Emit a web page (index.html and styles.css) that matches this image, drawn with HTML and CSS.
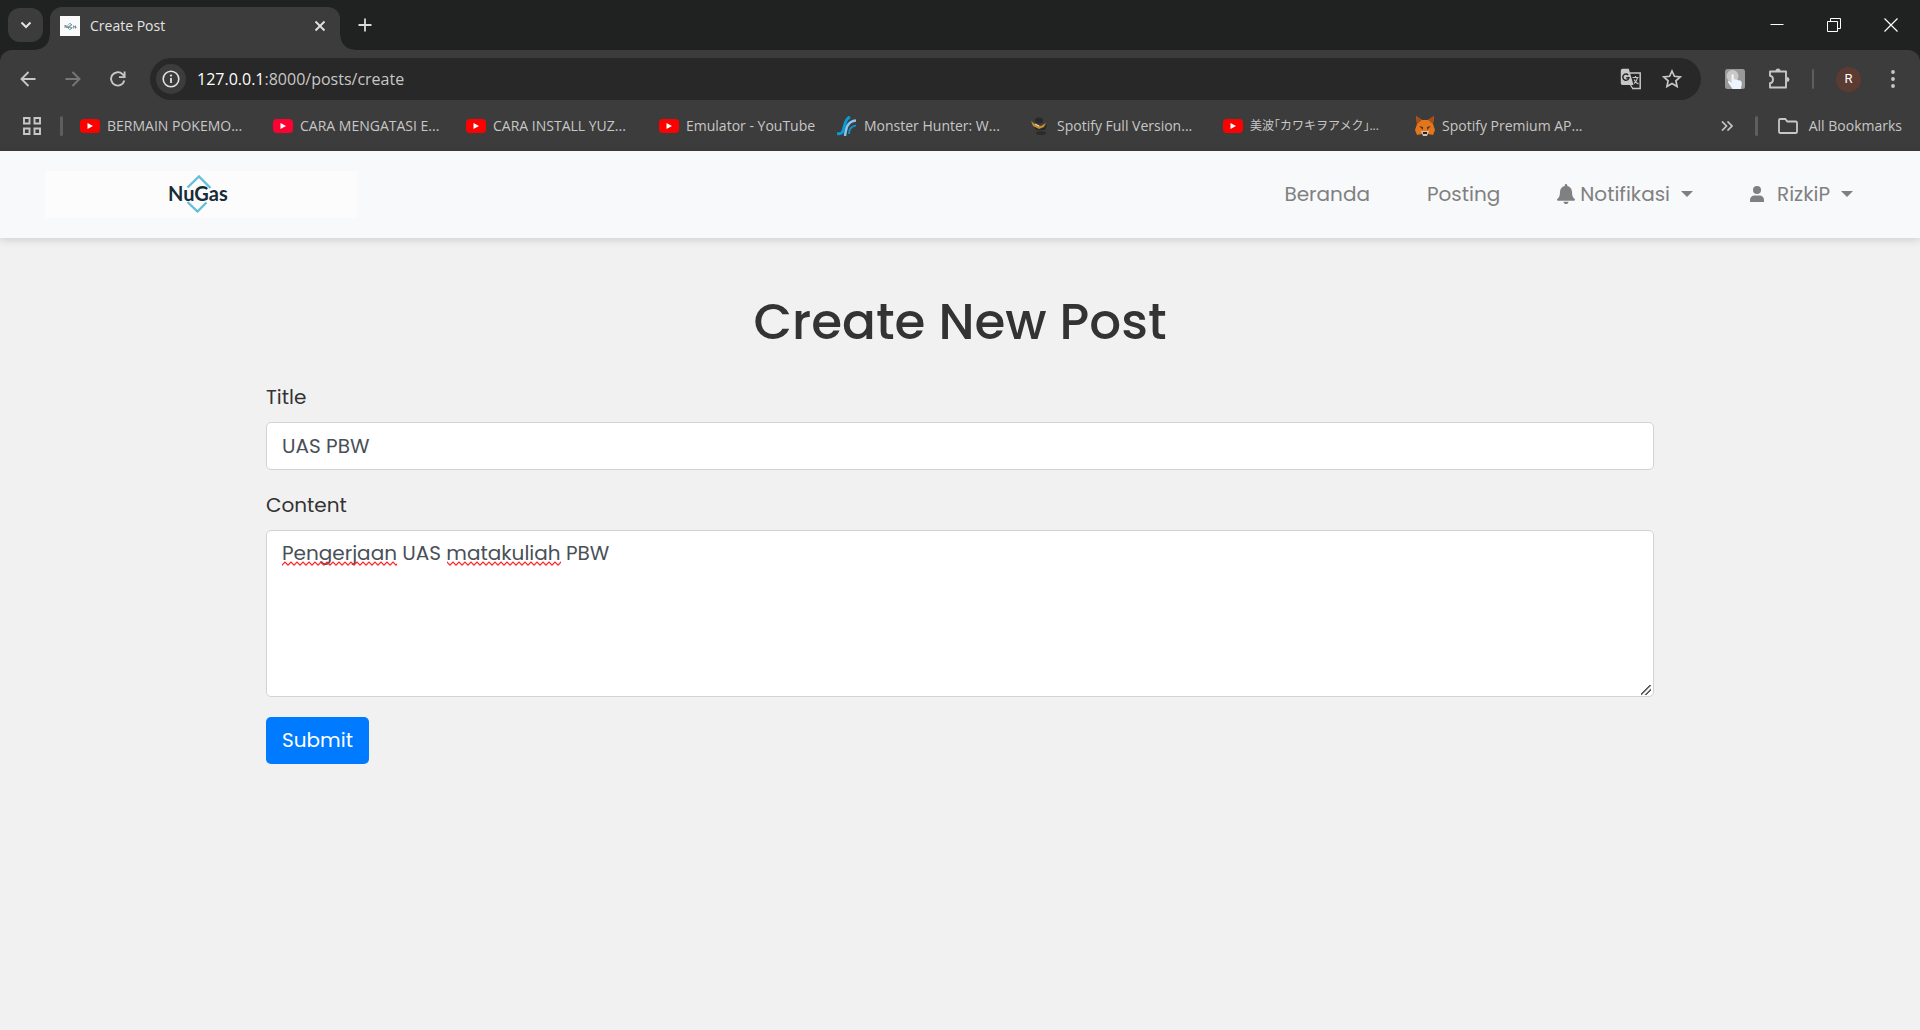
FILE: index.html
```html
<!DOCTYPE html>
<html lang="id">
<head>
<meta charset="utf-8">
<meta name="viewport" content="width=device-width, initial-scale=1">
<title>Create Post</title>
<link rel="stylesheet" href="styles.css">
</head>
<body>
<svg class="symbols" aria-hidden="true">
  <symbol id="youtube" viewBox="0 0 20 20"><rect y="3" width="20" height="14" rx="4" fill="currentColor"/><path d="M7.500 7v6l5.500-3z" fill="#fff"/></symbol>
</svg>
<div class="browser">
  <div class="tab-strip">
    <button class="tab-search" aria-label="Search tabs"><svg width="12" height="12" viewBox="0 0 12 12"><path d="M1.500 3.500 6 8l4.500-4.500" fill="none" stroke="#e3e3e3" stroke-width="2"/></svg></button>
    <div class="tab">
      <svg width="20" height="20" viewBox="0 0 20 20"><rect width="20" height="20" fill="#fafafa"/><path d="M8 9l2-2 2 2M8 12l2 2 2-2" fill="none" stroke="#6cc3da"/><path d="M5 12V9l2 3V9m1 1v2h1v-2m3-1h-2v3h2v-1m1-1h1v2h-1m3-2h-1v1h1v1h-1" fill="none" stroke="#384a55" stroke-width=".6"/></svg>
      <span class="tab-title">Create Post</span>
      <button class="icon-button tab-close" aria-label="Close tab"><svg width="12" height="12" viewBox="0 0 12 12"><path d="M1.500 1.500l9 9m0-9l-9 9" stroke="#e3e3e3" stroke-width="1.800"/></svg></button>
    </div>
    <button class="icon-button new-tab" aria-label="New tab"><svg width="14" height="14" viewBox="0 0 14 14"><path d="M7 .5v13M.5 7h13" stroke="#dadada" stroke-width="1.800"/></svg></button>
    <div class="window-controls">
      <button class="icon-button" aria-label="Minimize"><svg width="14" height="14" viewBox="0 0 14 14"><path d="M.5 6.500h13" stroke="#fff"/></svg></button>
      <button class="icon-button" aria-label="Restore"><svg width="14" height="14" viewBox="0 0 14 14"><path d="M.5 3.500h10v10H.5zM3.500 3V.5h10v10H11" fill="none" stroke="#fff"/></svg></button>
      <button class="icon-button" aria-label="Close"><svg width="14" height="14" viewBox="0 0 14 14"><path d="M.5.5l13 13m0-13l-13 13" stroke="#fff" stroke-width="1.200"/></svg></button>
    </div>
  </div>
  <div class="toolbar">
    <div class="history">
      <button class="icon-button" aria-label="Back"><svg width="16" height="16" viewBox="0 0 16 16"><path d="M15.500 8H2M8.500 1L1.500 8l7 7" fill="none" stroke="#c7c7c7" stroke-width="1.900"/></svg></button>
      <button class="icon-button" aria-label="Forward"><svg width="16" height="16" viewBox="0 0 16 16"><path d="M.5 8H14M7.500 1l7 7-7 7" fill="none" stroke="#777" stroke-width="1.900"/></svg></button>
      <button class="icon-button" aria-label="Reload"><svg width="16" height="16" viewBox="0 0 16 16"><path d="M14.300 9.500A6.700 6.700 0 1 1 12.700 3.300L14 4.600M14.600.5v5.600H9" fill="none" stroke="#c7c7c7" stroke-width="1.900"/></svg></button>
    </div>
    <div class="address-bar">
      <button class="site-info" aria-label="Site information"><svg width="18" height="18" viewBox="0 0 18 18"><circle cx="9" cy="9" r="7.800" fill="none" stroke="#e3e3e3" stroke-width="1.600"/><path d="M9 8v5" stroke="#e3e3e3" stroke-width="1.800"/><circle cx="9" cy="5.600" r="1.100" fill="#e3e3e3"/></svg></button>
      <a class="url" href="#"><span class="url-host">127.0.0.1</span>:8000/posts/create</a>
      <button class="icon-button" aria-label="Translate"><svg width="22" height="22" viewBox="0 0 22 22"><path d="M10 5h10.200v15.500H12" fill="none" stroke="#c7c7c7" stroke-width="1.500"/><path d="M2.500.8h6.300l4.700 16.200H2.500a1.700 1.700 0 0 1-1.700-1.700V2.500A1.700 1.700 0 0 1 2.500.8z" fill="#c7c7c7"/><path d="M8.200 7a3.100 3.100 0 1 0 .8 2.700H6.200" fill="none" stroke="#282828" stroke-width="1.500"/><path d="M12.500 9.500H18.500M15.500 8v1.500M17.500 9.500c-.5 3-2 5-3.500 6M14 11.500c1 2 2.500 3.500 4.500 4.500M10.500 17l2.500 4" fill="none" stroke="#c7c7c7" stroke-width="1.200"/></svg></button>
      <button class="icon-button" aria-label="Bookmark this page"><svg width="20" height="20" viewBox="0 0 20 20"><path d="M10 2l2.400 5.300 5.800.6-4.300 3.900 1.200 5.700L10 14.600l-5.100 2.900 1.200-5.700L1.800 7.900l5.800-.6z" fill="none" stroke="#c7c7c7" stroke-width="1.700"/></svg></button>
    </div>
    <div class="extensions">
      <button class="icon-button" aria-label="Click helper"><svg width="22" height="22" viewBox="0 0 22 22"><rect x="1" y="1" width="20" height="20" rx="2.500" fill="#999"/><circle cx="8.500" cy="8" r="6" fill="#c8c8c8"/><path d="M7.500 7.500c0-1.600 2.300-1.600 2.300 0v4l1-.5 1.200.8 1.300-.4 1.200 1 1.300-.2c1.500.6 2 2 2 3.800l-1 5H8.500L4 14.300c-.4-1.300 1-1.700 2-.8l1.500 1z" fill="#eef4fb"/></svg></button>
      <button class="icon-button" aria-label="Extensions"><svg width="22" height="22" viewBox="0 0 22 22"><path d="M2 3.500h16v16H2v-4.300c4-.6 4-6.800 0-7.400z" fill="none" stroke="#c7c7c7" stroke-width="1.900" stroke-linejoin="round"/><path d="M7.500 3a2.500 2.500 0 0 1 5 0M19 9a2.500 2.500 0 0 1 0 5" fill="#c7c7c7"/></svg></button>
      <span class="divider thin"></span>
      <button class="profile" aria-label="Profile R">R</button>
      <button class="icon-button more" aria-label="Menu"><svg width="6" height="18" viewBox="0 0 6 18" fill="#c7c7c7"><circle cx="3" cy="2" r="1.900"/><circle cx="3" cy="9" r="1.900"/><circle cx="3" cy="16" r="1.900"/></svg></button>
    </div>
  </div>
  <div class="bookmarks">
    <button class="icon-button" aria-label="Apps"><svg width="18" height="18" viewBox="0 0 18 18"><path d="M1 1h5.500v5.500H1zM11.500 1H17v5.500h-5.500zM1 11.500h5.500V17H1zM11.500 11.500H17V17h-5.500z" fill="none" stroke="#c7c7c7" stroke-width="1.900"/></svg></button>
    <span class="divider"></span>
    <nav class="bookmark-list" aria-label="Bookmarks">
      <a href="#"><svg class="yt"><use href="#youtube"/></svg>BERMAIN POKEMO...</a>
      <a href="#"><svg class="yt pink"><use href="#youtube"/></svg>CARA MENGATASI E...</a>
      <a href="#"><svg class="yt"><use href="#youtube"/></svg>CARA INSTALL YUZ...</a>
      <a class="short" href="#"><svg class="yt"><use href="#youtube"/></svg>Emulator - YouTube</a>
      <a href="#"><svg viewBox="0 0 20 20" fill="none"><path d="M0 17.500C7 19 6 13 8 8c1-4 3-6 5-7" stroke="#0a9bd8" stroke-width="3"/><path d="M8 20C9 13 10 5 19 4.500" stroke="#86c9ee" stroke-width="2.500"/><path d="M12 18c0-5 2-8 7-8.500" stroke="#178ac0" stroke-width="2"/></svg>Monster Hunter: W...</a>
      <a href="#"><svg viewBox="0 0 20 20"><ellipse cx="9" cy="4.500" rx="4" ry="3" fill="#292929"/><path d="M3 9l9 2 5-3-2 6H6z" fill="#282828"/><path d="M1 5l5 4 5 1 5-3-2 4-5 2-6-3z" fill="#c78b31"/><path d="M5 8l4 2" stroke="#eee"/><ellipse cx="11" cy="17" rx="5" ry="2" fill="#2b2b2b"/></svg>Spotify Full Version...</a>
      <a class="japanese" href="#" lang="ja"><svg class="yt"><use href="#youtube"/></svg>美波｢カワキヲアメク｣...</a>
      <a href="#"><svg viewBox="0 0 20 20"><path d="M1 0l6 4h6l6-4-1 8 2 6-2 5-5-1-3 2-3-2-5 1-2-5 2-6z" fill="#e2761b"/><path d="M1 0l6 4-5 4zM19 0l-6 4 5 4z" fill="#a94c1d"/><path d="M4 10l4 1v3zM16 10l-4 1v3z" fill="#5d321e"/><path d="M6 15h8l-2 5H8z" fill="#d7c1b3"/><path d="M8 16h4v2H8z" fill="#222"/></svg>Spotify Premium AP...</a>
    </nav>
    <div class="bookmark-end">
      <button class="icon-button" aria-label="More bookmarks"><svg width="12" height="10" viewBox="0 0 12 10"><path d="M1 .5L5.500 5 1 9.500M6.500.5L11 5 6.500 9.500" fill="none" stroke="#c7c7c7" stroke-width="1.700"/></svg></button>
      <span class="divider"></span>
      <a href="#"><svg viewBox="0 0 20 16"><path d="M1 2.300Q1 1 2.300 1h5l2 2.500h8.400q1.300 0 1.300 1.300v8.900q0 1.300-1.300 1.300H2.300Q1 15 1 13.700z" fill="none" stroke="#c7c7c7" stroke-width="1.800"/></svg>All Bookmarks</a>
    </div>
  </div>
</div>

<header class="navbar">
  <a class="brand" href="#">
    <svg class="brand-mark" width="26" height="38" viewBox="0 0 26 38"><path d="M1.500 12.500L13 1.500l11.500 11.500M1.500 27l10 9.500L20.500 27.500" fill="none" stroke="#64bfdc" stroke-width="2.400"/></svg>
    <span class="brand-name">NuGas</span>
  </a>
  <nav class="menu">
    <a href="#">Beranda</a>
    <a href="#">Posting</a>
    <button><svg class="bell" width="18" height="20" viewBox="0 0 18 20" fill="currentColor"><path d="M9 0c.8 0 1.300.6 1.300 1.300v.8C13.500 2.800 15 5.200 15 8c0 4 1 5.500 2.600 6.900.9.900.3 1.900-.7 1.900H1.100c-1 0-1.600-1-.7-1.900C2 13.500 3 12 3 8c0-2.800 1.500-5.200 4.700-5.900v-.8C7.700.6 8.200 0 9 0zM6.500 17.700h5C11.300 19.200 10.300 20 9 20s-2.300-.8-2.500-2.300z"/></svg><span>Notifikasi</span><i class="caret"></i></button>
    <button class="user"><svg width="14" height="16" viewBox="0 0 14 16" fill="currentColor"><circle cx="7" cy="4" r="4"/><path d="M0 16v-2c0-3 2-4.500 4.500-4.500h5C12 9.500 14 11 14 14v2z"/></svg><span>RizkiP</span><i class="caret"></i></button>
  </nav>
</header>

<main class="container">
  <h1>Create New Post</h1>
  <form>
    <label for="title">Title</label>
    <input id="title" type="text" value="UAS PBW" spellcheck="false">
    <label for="content">Content</label>
    <div class="content-field">
      <textarea id="content" spellcheck="false">Pengerjaan UAS matakuliah PBW</textarea>
      <svg class="spelling" width="340" height="6" aria-hidden="true">
        <defs><pattern id="wave" width="6" height="6" patternUnits="userSpaceOnUse"><path d="M-1 3L0 4.200 3 1.200l3 3L7 3" fill="none" stroke="#f22" stroke-width="1.200"/></pattern></defs>
        <rect class="first-word" height="6" fill="url(#wave)"/><rect class="second-word" height="6" fill="url(#wave)"/>
      </svg>
    </div>
    <button class="submit" type="submit">Submit</button>
  </form>
</main>
</body>
</html>
```
FILE: styles.css
```css
* { box-sizing: border-box; }

body {
  margin: 0;
  background: #f1f1f1;
  color: #333;
  font-family: "Poppins", "Inter", sans-serif;
  font-size: 20px;
  line-height: 30px;
}

a { color: inherit; text-decoration: none; }
button { padding: 0; border: 0; background: none; color: inherit; font: inherit; cursor: pointer; }
svg { display: block; flex: none; }
.symbols { position: absolute; width: 0; height: 0; }

/* Browser frame */
.browser {
  background: #202221;
  color: #c7c7c7;
  font-family: "Segoe UI", "Open Sans", "Noto Sans CJK JP", sans-serif;
  font-size: 14px;
  line-height: 20px;
}
.icon-button { display: flex; flex: none; align-items: center; justify-content: center; }

.tab-strip { display: flex; align-items: center; height: 50px; padding-left: 8px; }
.tab-search {
  display: flex;
  align-items: center;
  justify-content: center;
  width: 35px;
  height: 34px;
  border-radius: 12px;
  background: #3c3c3c;
}
.tab {
  position: relative;
  display: flex;
  align-items: center;
  align-self: flex-end;
  gap: 10px;
  width: 290px;
  height: 43px;
  margin-left: 7px;
  padding: 0 14px 6px 10px;
  border-radius: 12px 12px 0 0;
  background: #3c3c3c;
  color: #e3e3e3;
}
.tab::before,
.tab::after {
  content: "";
  position: absolute;
  bottom: 0;
  width: 14px;
  height: 14px;
}
.tab::before { right: 100%; background: radial-gradient(circle at 0 0, transparent 13px, #3c3c3c 14px); }
.tab::after { left: 100%; background: radial-gradient(circle at 100% 0, transparent 13px, #3c3c3c 14px); }
.tab-title { flex: 1; }
.new-tab { margin-left: 18px; }
.window-controls { display: flex; gap: 43px; margin-left: auto; padding-right: 22px; }

.toolbar {
  display: flex;
  align-items: center;
  height: 58px;
  padding: 0 24px 0 20px;
  border-radius: 12px 12px 0 0;
  background: #3c3c3c;
}
.history { display: flex; gap: 29px; margin-right: 24px; }
.address-bar {
  display: flex;
  flex: 1;
  align-items: center;
  gap: 20px;
  height: 42px;
  padding: 0 19px 0 6px;
  border-radius: 21px;
  background: #282828;
}
.site-info {
  display: flex;
  align-items: center;
  justify-content: center;
  width: 30px;
  height: 30px;
  border-radius: 50%;
  background: #3c3c3c;
}
.url { flex: 1; margin-left: -9px; font-size: 16px; }
.url-host { color: #fff; }
.extensions { display: flex; align-items: center; gap: 22px; margin-left: 23px; }
.extensions .more { margin-left: 7px; }
.profile {
  width: 25px;
  height: 25px;
  border-radius: 50%;
  background: #5c3b33;
  color: #fff;
  font-family: Roboto, sans-serif;
  font-size: 13px;
}
.divider { flex: none; width: 3px; height: 20px; border-radius: 2px; background: #5e5e5e; }
.divider.thin { width: 2px; }

.bookmarks { display: flex; align-items: center; height: 43px; padding: 0 18px 8px 23px; background: #3c3c3c; }
.bookmarks .divider { margin-left: 19px; }
.bookmark-list { display: flex; flex: 1; margin-left: 17px; overflow: hidden; }
.bookmarks a { display: flex; align-items: center; gap: 7px; white-space: nowrap; }
.bookmarks a svg { width: 20px; height: 20px; }
.bookmark-list a { flex: none; width: 193px; }
.bookmark-list .short { width: 178px; }
.bookmark-list .japanese { width: 192px; font-size: 12px; }
.bookmarks .yt { color: #f00; }
.bookmarks .pink { color: #ff0033; }
.bookmark-end { display: flex; align-items: center; }
.bookmark-end .divider { margin: 0 20px 0 22px; }
.bookmark-end a { gap: 11px; }

/* Site navigation */
.navbar {
  display: flex;
  align-items: center;
  justify-content: space-between;
  min-height: 87px;
  padding: 0 67px 0 45px;
  background: #f8f9fb;
  box-shadow: 0 2px 8px rgba(0, 0, 0, .15);
}
.brand { position: relative; width: 313px; height: 47px; background: #fcfcfc; }
.brand-mark { position: absolute; top: 4px; left: 141px; }
.brand-name {
  position: absolute;
  top: 7px;
  left: 123px;
  color: #172c38;
  font-family: "Lato", sans-serif;
  font-size: 20px;
  font-weight: 700;
}
.menu { display: flex; gap: 57px; padding-bottom: 2px; color: #808080; }
.menu button { display: flex; align-items: center; }
.bell { margin-right: 5px; }
.user svg { margin-right: 13px; }
.caret {
  margin-left: 11px;
  border: 6px solid transparent;
  border-top-color: currentColor;
  border-bottom: 0;
}

/* Post form */
.container { max-width: 1428px; margin: 0 auto; padding: 54px 20px; }
h1 { margin: 0 0 30px; font-size: 50px; font-weight: 500; line-height: 60px; text-align: center; }
label { display: block; margin-bottom: 10px; }
input,
textarea {
  display: block;
  width: 100%;
  border: 1px solid #ced4da;
  border-radius: 5px;
  background: #fff;
  color: #495057;
  font: inherit;
}
input { height: 48px; margin-bottom: 20px; padding: 8px 15px; }
.content-field { position: relative; margin-bottom: 20px; }
textarea { height: 167px; padding: 7px 15px; resize: vertical; }
textarea::-webkit-resizer {
  background: linear-gradient(135deg, transparent 6px, #555 6px 7px, transparent 8px 9px, #555 10px 11px, transparent 11px) 3px 4px / 10px 10px no-repeat;
}
.spelling { position: absolute; top: 31px; left: 16px; }
.first-word { width: 115px; }
.second-word { width: 114px; x: 165px; }
.submit { width: 103px; height: 47px; padding-bottom: 1px; border-radius: 5px; background: #007bff; color: #fff; }
```
